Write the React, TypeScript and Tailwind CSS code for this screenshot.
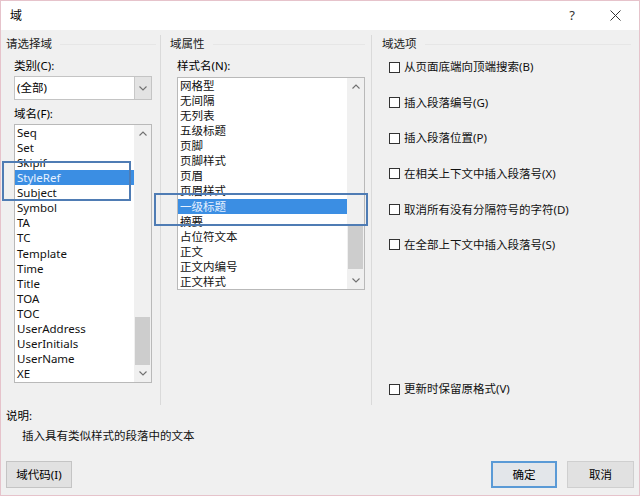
import React from "react"

const leftItems = [
  "Seq", "Set", "Skipif", "StyleRef", "Subject", "Symbol", "TA", "TC", "Template",
  "Time", "Title", "TOA", "TOC", "UserAddress", "UserInitials", "UserName", "XE",
]

const styleItems = [
  "网格型", "无间隔", "无列表", "五级标题", "页脚", "页脚样式", "页眉", "页眉样式",
  "一级标题", "摘要", "占位符文本", "正文", "正文内编号", "正文样式",
]

const options = [
  "从页面底端向顶端搜索(B)",
  "插入段落编号(G)",
  "插入段落位置(P)",
  "在相关上下文中插入段落号(X)",
  "取消所有没有分隔符号的字符(D)",
  "在全部上下文中插入段落号(S)",
]

function Chevron({ down = false }: { down?: boolean }) {
  return (
    <svg width="8" height="5" viewBox="0 0 8 5" className={down ? "rotate-180" : ""}>
      <path d="M0.5 4.5 L4 1 L7.5 4.5" fill="none" stroke="#707070" strokeWidth="1.1" />
    </svg>
  )
}

function Scrollbar({ thumb, gapBottom }: { thumb: number; gapBottom: number }) {
  return (
    <div className="flex w-[17px] flex-col bg-[#f0f0f0]">
      <div className="flex h-[17px] items-center justify-center">
        <Chevron />
      </div>
      <div className="flex flex-1 flex-col justify-end px-px">
        <div className="bg-[#cdcdcd]" style={{ height: thumb, marginBottom: gapBottom }} />
      </div>
      <div className="flex h-[17px] items-center justify-center">
        <Chevron down />
      </div>
    </div>
  )
}

function ListBox({
  items,
  selected,
  width,
  height,
  thumb,
  gapBottom,
}: {
  items: string[]
  selected: number
  width: number
  height: number
  thumb: number
  gapBottom: number
}) {
  return (
    <div className="flex border border-[#b9b9b9] bg-white" style={{ width, height }}>
      <div className="flex-1 overflow-hidden">
        {items.map((it, i) => (
          <div
            key={it}
            className={
              "flex h-[15.1px] items-center whitespace-nowrap pl-[2px] " +
              (i === selected ? "bg-[#3b8ee3] text-[#e6f1ff]" : "text-[#111]")
            }
          >
            {it}
          </div>
        ))}
      </div>
      <Scrollbar thumb={thumb} gapBottom={gapBottom} />
    </div>
  )
}

function GroupHeader({ text }: { text: string }) {
  return (
    <div className="flex h-[16px] items-center">
      <span className="text-[#222]">{text}</span>
      <div className="ml-2 h-px flex-1 bg-[#e6e6e6]" />
    </div>
  )
}

function Checkbox({ label }: { label: string }) {
  return (
    <div className="flex h-[16px] items-center">
      <div className="h-[11px] w-[11px] border border-[#333] bg-white" />
      <span className="ml-[4px] text-[#111]">{label}</span>
    </div>
  )
}

export default function App() {
  return (
    <div
      className="relative flex h-[496px] w-[640px] flex-col border border-[#e6c3cb] bg-[#f0f0f0] text-[11.5px] leading-none text-black"
      style={{ fontFamily: '"Noto Sans", "Noto Sans CJK SC", sans-serif' }}
    >
      {/* title bar */}
      <div className="flex h-[29px] items-center bg-white pl-[9px]">
        <span className="text-[12px]">域</span>
        <div className="ml-auto flex items-center">
          <span className="w-[20px] text-center text-[13px] text-[#333]">?</span>
          <div className="ml-[27px] mr-[18px] flex w-[12px] justify-center">
            <svg width="11" height="11" viewBox="0 0 11 11">
              <path d="M0.5 0.5 L10.5 10.5 M10.5 0.5 L0.5 10.5" stroke="#333" strokeWidth="1" />
            </svg>
          </div>
        </div>
      </div>

      {/* main columns */}
      <div className="mt-[5px] flex h-[370px]">
        {/* left */}
        <div className="w-[160px] border-r border-[#dadada] pl-[5px] pr-[4px] pt-px">
          <GroupHeader text="请选择域" />
          <div className="ml-[8px]">
            <div className="mt-[6px] flex h-[16px] items-center">类别(C):</div>
            <div className="mt-[2px] flex h-[24px] w-[138px] border border-[#c4c4c4] bg-white">
              <div className="flex flex-1 items-center pl-[2px]">(全部)</div>
              <div className="flex w-[17px] items-center justify-center border-l border-[#c8c8c8] bg-[#e3e3e3]">
                <Chevron down />
              </div>
            </div>
            <div className="mt-[6px] flex h-[16px] items-center">域名(F):</div>
            <div className="mt-[2px]">
              <ListBox items={leftItems} selected={3} width={138} height={259} thumb={48} gapBottom={0} />
            </div>
          </div>
        </div>

        {/* middle */}
        <div className="w-[211px] border-r border-[#dadada] pl-[9px] pr-[6px] pt-px">
          <GroupHeader text="域属性" />
          <div className="ml-[7px]">
            <div className="mt-[6px] flex h-[16px] items-center">样式名(N):</div>
            <div className="mt-[3px]">
              <ListBox items={styleItems} selected={8} width={188} height={213} thumb={43} gapBottom={3} />
            </div>
          </div>
        </div>

        {/* right */}
        <div className="flex flex-1 flex-col pb-[8px] pl-[10px] pr-[8px] pt-px">
          <GroupHeader text="域选项" />
          <div className="ml-[7px] mt-[7px] flex flex-col gap-[19.6px]">
            {options.map((o) => (
              <Checkbox key={o} label={o} />
            ))}
          </div>
          <div className="ml-[7px] mt-auto">
            <Checkbox label="更新时保留原格式(V)" />
          </div>
        </div>
      </div>

      {/* description */}
      <div className="mt-[3px] flex h-[16px] items-center pl-[5px]">说明:</div>
      <div className="mt-[4px] flex h-[16px] items-center pl-[21px] text-[#111]">插入具有类似样式的段落中的文本</div>

      {/* buttons */}
      <div className="mt-[17px] flex items-center px-[5px]">
        <button className="flex h-[27px] w-[66px] items-center justify-center border border-[#c4c4c4] bg-[#e1e1e1]">
          域代码(I)
        </button>
        <div className="ml-auto flex gap-[10px]">
          <button className="flex h-[27px] w-[66px] items-center justify-center border-2 border-[#5a9ad6] bg-[#e3e6ea]">
            确定
          </button>
          <button className="flex h-[27px] w-[67px] items-center justify-center border border-[#cfcfcf] bg-[#e1e1e1]">
            取消
          </button>
        </div>
      </div>

      {/* annotation boxes */}
      <div className="absolute left-[1px] top-[160px] h-[40px] w-[129px] border-2 border-[#4f7cb4]" />
      <div className="absolute left-[153px] top-[192px] h-[33px] w-[214px] border-2 border-[#4f7cb4]" />
    </div>
  )
}
